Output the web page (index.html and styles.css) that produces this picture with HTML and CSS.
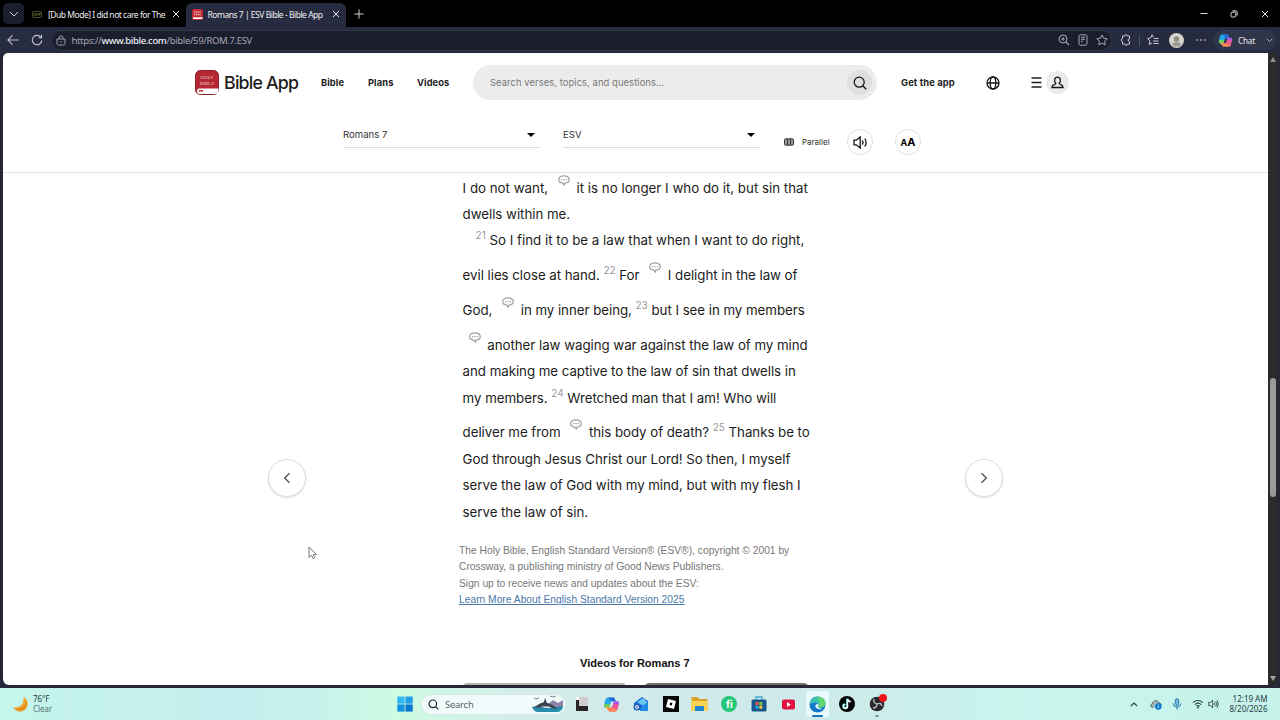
FILE: index.html
```html
<!DOCTYPE html>
<html lang="en">
<head>
    <meta charset="UTF-8">
    <meta name="viewport" content="width=device-width, initial-scale=1.0">
    <title>Romans 7 | ESV Bible - Bible App</title>
    <link rel="stylesheet" href="styles.css">
</head>
<body>
    <svg class="defs" width="0" height="0">
        <symbol id="note" viewBox="0 0 12 11">
            <path d="M6 .8C3 .8.7 2.4.7 4.6c0 1.9 1.7 3.3 4 3.6L6.3 10l.6-1.8c2.6-.2 4.4-1.7 4.4-3.6C11.300 2.400 9 .8 6 .8z" fill="none" stroke="#a3a3a3" stroke-width="1.3"/>
            <path d="M3 4.600h1.300M5.400 4.600h1.300M7.800 4.600h1.300" stroke="#a3a3a3" stroke-width="1.300"/>
        </symbol>
        <symbol id="close" viewBox="0 0 8 8">
            <path d="M1 1l6 6M7 1L1 7" fill="none" stroke="#e4e4e8" stroke-width="1"/>
        </symbol>
        <symbol id="copilot" viewBox="0 0 16 16">
            <path d="M4.500 1.500h5q1.300 0 1.700 1.300L12 5H9q-1.400 0-1.800 1.400L5.700 11H3Q.3 11 1 8l1.300-4.800q.5-1.700 2.200-1.700z" fill="#25a9e8"/>
            <path d="M5 1.500h4.500q1.300 0 1.700 1.300L12 5H8L6 2.800z" fill="#2468dc"/>
            <path d="M1.200 7.500l5.600.3-1.100 3.200H3Q.5 11 1.200 7.500z" fill="#75cd53"/>
            <path d="M2 10.600l3.900-.3L4.500 13z" fill="#f4c534"/>
            <path d="M11.500 14.500h-5q-1.300 0-1.700-1.300L4 11h3q1.400 0 1.800-1.400L10.300 5H13q2.700 0 2 3l-1.300 4.800q-.5 1.700-2.200 1.700z" fill="#ed5a94"/>
            <path d="M10.300 5H13q2.500 0 2 3l-5.500-.5z" fill="#a65be8"/>
            <path d="M4 11h3l6.500 2q-.6 1.500-2 1.500h-5q-1.300 0-1.700-1.300z" fill="#ff8a4a"/>
        </symbol>
    </svg>

    <!-- tab strip -->
    <div class="tabs">
        <button class="tab-menu"><svg width="10" height="6" viewBox="0 0 10 6"><path d="M1 1l4 4 4-4" fill="none" stroke="#d0d1d8"/></svg></button>
        <div class="tab">
            <span class="fav-dub">DVP</span>
            <span class="tab-title dub-title">[Dub Mode] I did not care for The</span>
            <svg width="8" height="8"><use href="#close"/></svg>
        </div>
        <div class="tab active">
            <svg width="11" height="11" viewBox="0 0 11 11"><rect width="11" height="11" rx="2" fill="#c02b36"/><path d="M2 3h7M2 5.500h7" stroke="#e9a9ad" stroke-width="1.300" stroke-dasharray="1.300 .5"/><path d="M1 8.300h9.500v1.700H1z" fill="#fff"/></svg>
            <span class="tab-title active-title">Romans 7 | ESV Bible - Bible App</span>
            <svg width="8" height="8"><use href="#close"/></svg>
        </div>
        <svg class="new-tab" width="10" height="10" viewBox="0 0 10 10"><path d="M5 .5v9M.5 5h9" stroke="#d3d3d7"/></svg>
        <div class="window-buttons">
            <svg width="8" height="8" viewBox="0 0 8 8"><path d="M.5 3.500h7" stroke="#ddd"/></svg>
            <svg width="8" height="8" viewBox="0 0 8 8"><rect x="1" y="2.200" width="4.800" height="4.800" rx="1" fill="none" stroke="#ddd"/><path d="M2.500.8h3.200q1.500 0 1.500 1.500v3.200" fill="none" stroke="#ddd"/></svg>
            <svg width="8" height="8"><use href="#close"/></svg>
        </div>
    </div>

    <!-- address bar -->
    <div class="toolbar">
        <svg class="back" width="12" height="12" viewBox="0 0 12 12"><path d="M11.500 6H1M5.500 1.300L.9 6l4.600 4.700" fill="none" stroke="#bfc2cf" stroke-width="1.100"/></svg>
        <svg class="reload" width="12" height="12" viewBox="0 0 12 12"><path d="M10.700 6.400A4.700 4.700 0 1 1 9.200 2.600l1.100 1M10.500.8v3H7.600" fill="none" stroke="#bfc2cf" stroke-width="1.100"/></svg>
        <div class="address">
            <svg width="10" height="11" viewBox="0 0 10 11"><path d="M3 4V2.900a2 2 0 0 1 4 0V4M1 4h8v4.500q0 1.500-1.500 1.500h-5Q1 10 1 8.500zM4.300 6.900h1.400" fill="none" stroke="#9b9daa"/></svg>
            <span class="url">https://<b>www.bible.com</b>/bible/59/ROM.7.ESV</span>
            <span class="address-icons">
                <svg width="12" height="12" viewBox="0 0 12 12"><circle cx="5" cy="5" r="4" fill="none" stroke="#a4a7b5"/><path d="M3.300 5h3.400M5 3.300v3.400M8 8l3.200 3.200" stroke="#a4a7b5" stroke-width="1.100"/></svg>
                <svg width="12" height="12" viewBox="0 0 12 12"><rect x="2" y=".8" width="8" height="10.400" rx="1.500" fill="none" stroke="#a4a7b5"/><path d="M4 3.300h4M4 5.300h4M4 7.300h2" stroke="#a4a7b5"/></svg>
                <svg width="12" height="12" viewBox="0 0 12 12"><path d="M6 .9l1.600 3.300 3.600.5-2.600 2.500.6 3.600L6 9.100l-3.200 1.700.6-3.600L.8 4.700l3.600-.5z" fill="none" stroke="#a4a7b5"/></svg>
            </span>
        </div>
        <svg class="ext" width="12" height="12" viewBox="0 0 12 12"><path d="M2.500 2h2.300a1.300 1.300 0 0 1 2.600 0H9.500v2.800a1.300 1.300 0 1 0 0 2.600V10H7.400a1.300 1.300 0 0 1-2.600 0H2.500V7.400a1.300 1.300 0 1 1 0-2.600z" fill="none" stroke="#c9cbd6"/></svg>
        <span class="divider"></span>
        <svg class="favorites" width="12" height="12" viewBox="0 0 12 12"><path d="M6.500 3.500L5 .8 3.600 4l-3.100.5 2.300 2.300-.5 3.700L5 9M7 4.500h4.500M6 7h5.500M6.500 9.500h5" fill="none" stroke="#c9cbd6"/></svg>
        <svg class="avatar" width="15" height="15" viewBox="0 0 15 15"><circle cx="7.500" cy="7.500" r="7.500" fill="#d6d4ce"/><circle cx="7.500" cy="6" r="2.700" fill="#8e8d84"/><path d="M3 12q0-3 4.500-3t4.500 3q-4.500 3-9 0z" fill="#9d9c93"/></svg>
        <svg class="more" width="10" height="4" viewBox="0 0 10 4"><path d="M.5 2h1.300M4.300 2h1.300M8.100 2h1.300" stroke="#d5d6dd" stroke-width="1.300"/></svg>
        <div class="chat">
            <svg width="15" height="15"><use href="#copilot"/></svg>
            <span>Chat</span>
            <svg width="7" height="5" viewBox="0 0 7 5"><path d="M.8.8l2.700 2.700L6.200.8" fill="none" stroke="#a9abb8"/></svg>
        </div>
    </div>

    <div class="viewport">
        <div class="page">
            <header class="site-header">
                <svg class="logo" width="24" height="25" viewBox="0 0 24 25">
                    <rect x=".5" y=".5" width="23" height="24" rx="5" fill="#b42733" stroke="#8d1f2a"/>
                    <path d="M4 18.500h19.500V21q-.5 3-4 3H4q-2-.5-2-2.800t2-2.700z" fill="#fff"/>
                    <path d="M4 20h4v2l-2-.8-2 .8z" fill="#c32f3a"/>
                    <text x="12" y="9" text-anchor="middle">HOLY</text>
                    <text x="12" y="14.500" text-anchor="middle">BIBLE</text>
                </svg>
                <span class="brand">Bible App</span>
                <nav class="site-nav">
                    <a class="nav-bible">Bible</a>
                    <a class="nav-plans">Plans</a>
                    <a class="nav-videos">Videos</a>
                </nav>
                <div class="search">
                    <span>Search verses, topics, and questions...</span>
                    <button class="search-button"><svg width="14" height="14" viewBox="0 0 14 14"><circle cx="6.200" cy="6.200" r="5" fill="none" stroke="#151515" stroke-width="1.300"/><path d="M9.800 9.800l3.400 3.400" stroke="#151515" stroke-width="1.300"/></svg></button>
                </div>
                <a class="get-app">Get the app</a>
                <svg class="globe" width="14" height="14" viewBox="0 0 14 14"><g fill="none" stroke="#151515" stroke-width="1.300"><circle cx="7" cy="7" r="6"/><ellipse cx="7" cy="7" rx="2.800" ry="6"/><path d="M1 7h12"/></g></svg>
                <svg class="menu" width="11" height="11" viewBox="0 0 11 11"><path d="M.5 1h10M.5 5.500h10M.5 10h10" stroke="#222" stroke-width="1.300"/></svg>
                <span class="user"><svg width="13" height="13" viewBox="0 0 13 13"><path d="M4.900 7.500C2.800 5.500 3.200 1.200 6.500 1.200s3.700 4.300 1.600 6.300c.2 1.200 3.900.8 4 4H.9c.1-3.200 3.800-2.800 4-4z" fill="none" stroke="#151515" stroke-width="1.300"/></svg></span>
            </header>

            <div class="reader-bar">
                <div class="select chapter"><span>Romans 7</span><i></i></div>
                <div class="select version"><span>ESV</span><i></i></div>
                <svg class="parallel-icon" width="10" height="8" viewBox="0 0 10 8"><rect x=".5" y=".8" width="9" height="6.400" rx="1.300" fill="#999" stroke="#333"/><path d="M3.500 1v6M6.500 1v6" stroke="#333"/></svg>
                <span class="parallel">Parallel</span>
                <button class="round audio"><svg width="15" height="13" viewBox="0 0 15 13"><path d="M1 4.200h2.300L7.200 1v11L3.300 8.800H1zM9.300 4.300q1.300 2.200 0 4.400M11.800 2.500q2.600 4 0 8" fill="none" stroke="#151515" stroke-width="1.300"/></svg></button>
                <button class="round font-size"><small>A</small>A</button>
            </div>

            <main class="chapter-text">
                <p class="line first">I do not want, <svg class="note"><use href="#note"/></svg> it is no longer I who do it, but sin that</p>
                <p class="line">dwells within me.</p>
                <p class="line indent"><sup>21</sup> So I find it to be a law that when I want to do right,</p>
                <p class="line tall">evil lies close at hand. <sup>22</sup> For <svg class="note"><use href="#note"/></svg> I delight in the law of</p>
                <p class="line tall">God, <svg class="note"><use href="#note"/></svg> in my inner being, <sup>23</sup> but I see in my members</p>
                <p class="line tall"><svg class="note"><use href="#note"/></svg> another law waging war against the law of my mind</p>
                <p class="line">and making me captive to the law of sin that dwells in</p>
                <p class="line">my members. <sup>24</sup> Wretched man that I am! Who will</p>
                <p class="line tall">deliver me from <svg class="note"><use href="#note"/></svg> this body of death? <sup>25</sup> Thanks be to</p>
                <p class="line">God through Jesus Christ our Lord! So then, I myself</p>
                <p class="line">serve the law of God with my mind, but with my flesh I</p>
                <p class="line">serve the law of sin.</p>
            </main>

            <div class="copyright">
                <p>The Holy Bible, English Standard Version® (ESV®), copyright © 2001 by<br>Crossway, a publishing ministry of Good News Publishers.</p>
                <p>Sign up to receive news and updates about the ESV:</p>
                <a href="#">Learn More About English Standard Version 2025</a>
            </div>

            <h2 class="videos-title">Videos for Romans 7</h2>
            <div class="videos">
                <div class="video"></div>
                <div class="video dark"></div>
            </div>

            <button class="page-arrow prev"><svg width="8" height="12" viewBox="0 0 8 12"><path d="M6.500 1.200L1.700 6l4.800 4.800" fill="none" stroke="#555" stroke-width="1.400"/></svg></button>
            <button class="page-arrow next"><svg width="8" height="12" viewBox="0 0 8 12"><path d="M1.500 1.200L6.300 6l-4.800 4.800" fill="none" stroke="#555" stroke-width="1.400"/></svg></button>
            <svg class="cursor" width="10" height="14" viewBox="0 0 10 14"><path d="M1 1v10.500l2.500-2.300 1.600 3.400 1.700-.8-1.500-3.300h3.200z" fill="#fff" stroke="#777"/></svg>
        </div>
        <div class="scrollbar">
            <i class="arrow-up"></i>
            <span class="thumb"></span>
            <i class="arrow-down"></i>
        </div>
    </div>

    <!-- taskbar -->
    <footer class="taskbar">
        <div class="weather">
            <svg width="16" height="17" viewBox="0 0 16 17"><path d="M10.500 1C17 4 16 14 8.500 15.500 4.500 16.300 1.500 14 .5 11.300c6.500 1.500 11-3.500 10-10.300z" fill="#f0a52c"/><path d="M2 12.500c5 1.500 10-1.500 11-7 1.800 6-4.500 11.500-11 7z" fill="#dc861d"/></svg>
            <div><span class="temp">76°F</span><span class="sky">Clear</span></div>
        </div>
        <svg class="start" width="16" height="16" viewBox="0 0 16 16"><path d="M.3.5h7.300v7.200H.3z" fill="#35b5ee"/><path d="M8.400.5h7.300v7.200H8.400z" fill="#229ee4"/><path d="M.3 8.400h7.300v7.200H.3z" fill="#1592dd"/><path d="M8.400 8.400h7.300v7.200H8.400z" fill="#0878cf"/></svg>
        <div class="task-search">
            <svg width="11" height="11" viewBox="0 0 11 11"><circle cx="4.800" cy="4.800" r="3.800" fill="none" stroke="#222" stroke-width="1.200"/><path d="M7.600 7.600l2.700 2.700" stroke="#222" stroke-width="1.200"/></svg>
            <span>Search</span>
            <svg class="orca" width="33" height="18" viewBox="0 0 33 18"><path d="M17 9l5-4 5 3 5-3v7q-2 4-6 4H6q-3-1-5-4z" fill="#8f83a8"/><path d="M1 12q7-1 14 0t17-1q-1 6-6 6H7q-4 0-6-5z" fill="#278bab"/><path d="M3 12.500Q8 8 13 7l1-4 2 5q6 1 10 6-10-2.500-23-1.500z" fill="#3a434f"/><path d="M10 11.500q6-1 11 1-6 1.500-11-1z" fill="#dfe6ea"/><path d="M3 3l2 1 3-1M19 1l3 1 3-1" fill="none" stroke="#667" stroke-width=".8"/></svg>
        </div>
        <div class="apps">
            <span class="app"><svg width="16" height="16" viewBox="0 0 16 16"><path d="M5 1h9v11H5z" fill="#d0cbcd"/><path d="M2 4h3v6h9v5H2z" fill="#282426"/><path d="M2 1h3v3H2z" fill="#f8f8f8"/></svg></span>
            <span class="app"><svg width="17" height="17"><use href="#copilot"/></svg></span>
            <span class="app"><svg width="16" height="16" viewBox="0 0 16 16"><path d="M1 7l8-6 6 4v9H5L1 11z" fill="#1769cf"/><path d="M4 6l6-4 5 5-5 3z" fill="#68c5f4"/><path d="M9 10l6-4v9H7z" fill="#1f8be5"/><circle cx="4" cy="11" r="3.500" fill="#1d5eb7"/><circle cx="4" cy="11" r="1.500" fill="none" stroke="#fff"/></svg></span>
            <span class="app"><svg width="16" height="16" viewBox="0 0 16 16"><path d="M0 0h16v16H0z" fill="#050505"/><path d="M5 3l8 2-2 8-8-2z" fill="#fff"/><path d="M7.100 6.600l2.300.5-.5 2.300-2.300-.5z" fill="#050505"/></svg></span>
            <span class="app"><svg width="17" height="16" viewBox="0 0 17 16"><path d="M.5 1h6l2 2h8v12H.5z" fill="#dca426"/><path d="M.5 5h16v10H.5z" fill="#fbd456"/><path d="M4 10h9v5H4z" fill="#2185cf"/></svg></span>
            <span class="app fiverr">fi</span>
            <span class="app"><svg width="16" height="16" viewBox="0 0 16 16"><path d="M5 4V1h6v3" fill="none" stroke="#39a9d9" stroke-width="1.300"/><rect x=".5" y="3.500" width="15" height="12" rx="1.500" fill="#17568c"/><path d="M4.500 6h3v3h-3z" fill="#f05434"/><path d="M8.300 6h3v3h-3z" fill="#84c446"/><path d="M4.500 9.700h3v3h-3z" fill="#2caaf0"/><path d="M8.300 9.700h3v3h-3z" fill="#fcc536"/></svg></span>
            <span class="app"><svg width="13" height="11" viewBox="0 0 13 11"><rect y=".5" width="13" height="10" rx="2" fill="#df1242"/><path d="M5 3l4 2.500L5 8z" fill="#fff"/></svg></span>
            <span class="app current"><svg width="17" height="17" viewBox="0 0 17 17"><circle cx="8.500" cy="8.500" r="8" fill="#1478c9"/><path d="M.7 8Q2 .5 9 .5q7 .5 7.500 7-.5 4-5 4-3-.5-2-2.500Q8 4.500.7 8z" fill="#39c3b0"/><path d="M8 1q8-1 8.500 6.500-.5 4-5 4-3-.5-2-2.500Q12 4 8 1z" fill="#61d66c"/><path d="M9.500 8q-2 4 4 5-5 1-7-2-1-3 3-3z" fill="#e6f8fb"/></svg></span>
            <span class="app"><svg width="16" height="16" viewBox="0 0 16 16"><circle cx="8" cy="8" r="8" fill="#050505"/><path d="M8.500 3v7.500a2 2 0 1 1-2-2M8.500 3q.5 2.500 3.200 2.800" fill="none" stroke="#27e4df" stroke-width="1.700" transform="translate(-.5 -.4)"/><path d="M8.500 3v7.500a2 2 0 1 1-2-2M8.500 3q.5 2.500 3.200 2.800" fill="none" stroke="#fff" stroke-width="1.500"/></svg></span>
            <span class="app obs"><svg width="16" height="16" viewBox="0 0 16 16"><circle cx="8" cy="8" r="7.300" fill="#292a2d"/><path d="M8 8Q4 7 5 3M8 8q4-2 5 2M8 8q0 4-4 4" fill="none" stroke="#b9babd" stroke-width="1.400"/></svg><i class="rec"></i></span>
        </div>
        <div class="tray">
            <svg class="up" width="8" height="5" viewBox="0 0 8 5"><path d="M.8 4.200L4 1l3.200 3.200" fill="none" stroke="#223d3d" stroke-width="1.200"/></svg>
            <svg class="cloud" width="12" height="11" viewBox="0 0 12 11"><path d="M3 8.500C0 8.500.3 5 2.500 4.700 3 1 8 .8 9 4q2.500.3 2.300 2.500" fill="#a5b8bb" stroke="#4f6063"/><circle cx="8.300" cy="7.500" r="3.200" fill="#0878d0"/><path d="M8.300 5.500v.9M8.300 7v2" stroke="#fff"/></svg>
            <svg class="mic" width="10" height="12" viewBox="0 0 10 12"><rect x="3.300" y=".8" width="3.400" height="6.500" rx="1.700" fill="#75b9e0" stroke="#2a72ac"/><path d="M1.200 5.500q0 3.600 3.800 3.600t3.800-3.600M5 9v2.500" fill="none" stroke="#2a72ac"/></svg>
            <svg class="wifi" width="12" height="10" viewBox="0 0 12 10"><path d="M1 3.700q5-4.500 10 0M2.700 5.600q3.300-3 6.600 0M4.300 7.300q1.700-1.500 3.400 0" fill="none" stroke="#2b4244" stroke-width="1.100"/><circle cx="6" cy="8.500" r=".9" fill="#2b4244"/></svg>
            <svg class="volume" width="11" height="10" viewBox="0 0 11 10"><path d="M.7 3.500h1.500L4.700 1.200v7.600L2.200 6.500H.7zM6.200 3.700q.8 1.300 0 2.600M7.700 2.500q1.700 2.500 0 5M9 1.200q2.600 3.800 0 7.600" fill="none" stroke="#2b4244" stroke-width=".9"/></svg>
            <div class="clock"><span>12:19 AM</span><span>8/20/2026</span></div>
        </div>
    </footer>
</body>
</html>
```

FILE: styles.css
```css
* {
    box-sizing: border-box;
}
body {
    margin: 0;
    width: 1280px;
    height: 720px;
    overflow: hidden;
    display: flex;
    flex-direction: column;
    background: #24273a;
    font-family: "Noto Sans", sans-serif;
}
svg {
    display: block;
    flex: none;
}
button {
    border: none;
    padding: 0;
    display: flex;
    align-items: center;
    justify-content: center;
}
p, h2 {
    margin: 0;
}
.defs {
    position: absolute;
}

/* browser tabs */
.tabs {
    height: 27px;
    display: flex;
    align-items: center;
    background: #000;
    color: #eee;
    font-size: 8.500px;
    letter-spacing: -.480px;
    white-space: nowrap;
}
.tab-menu {
    width: 21px;
    height: 21px;
    margin-left: 3px;
    border-radius: 5px;
    background: #1b1e2c;
}
.tab {
    display: flex;
    align-items: center;
    height: 24px;
    margin-top: 3px;
    padding-bottom: 2px;
    width: 162px;
    padding-left: 8px;
}
.tab.active {
    width: 160px;
    padding-left: 6px;
    background: #262b3f;
    border-radius: 6px 6px 0 0;
}
.fav-dub {
    width: 10px;
    height: 7px;
    border: 1px solid #474a28;
    border-radius: 2px;
    color: #a5a84b;
    font-size: 4px;
    line-height: 5px;
    letter-spacing: 0;
    text-align: center;
}
.dub-title {
    width: 119px;
    margin: 0 5px 0 6px;
}
.active-title {
    width: 119px;
    margin: 0 5px 0 4.500px;
}
.new-tab {
    margin-left: 8px;
}
.window-buttons {
    display: flex;
    gap: 22.500px;
    margin-left: auto;
    margin-right: 11.500px;
}

/* browser toolbar */
.toolbar {
    height: 26px;
    display: flex;
    align-items: center;
    background: #262b3f;
}
.back {
    margin-left: 7px;
}
.reload {
    margin-left: 12px;
}
.address {
    display: flex;
    align-items: center;
    width: 1061px;
    height: 21px;
    margin-left: 8px;
    padding: 0 5px;
    border: 1px solid #30354a;
    border-radius: 11px;
    background: #1b1e2d;
}
.address > svg {
    margin-left: -1px;
}
.url {
    margin-left: 5.500px;
    color: #a3a6b5;
    font-size: 9.500px;
    letter-spacing: -.350px;
}
.url b {
    color: #eceef5;
    font-weight: 500;
}
.address-icons {
    display: flex;
    gap: 7px;
    margin-left: auto;
    margin-right: -2px;
}
.ext {
    margin-left: 8px;
}
.divider {
    width: 1px;
    height: 11px;
    margin-left: 7px;
    background: #4b5064;
}
.favorites {
    margin-left: 7px;
}
.avatar {
    margin-left: 10px;
}
.more {
    margin-left: 12px;
}
.chat {
    display: flex;
    align-items: center;
    width: 62px;
    height: 20px;
    margin-left: 8px;
    padding-left: 4px;
    border-radius: 9px;
    background: #30364a;
    color: #e7e8ed;
    font-size: 8.200px;
    letter-spacing: -.200px;
}
.chat span {
    width: 18px;
    margin: 0 10px 0 5px;
}

/* web page */
.viewport {
    height: 632px;
    margin: 0 0 0 3px;
    display: flex;
}
.page {
    position: relative;
    width: 1265px;
    overflow: hidden;
    border-radius: 5px 0 0 6px;
    background: #fff;
    font-family: Inter, sans-serif;
    color: #1c1c1c;
}
.site-header {
    display: flex;
    align-items: center;
    height: 59px;
    padding-left: 192px;
}
.logo text {
    fill: #f0c6c8;
    font: 5px "Liberation Serif", serif;
}
.brand {
    width: 75px;
    margin-left: 5px;
    font-size: 17.800px;
    font-weight: 500;
    letter-spacing: -.800px;
    white-space: nowrap;
}
.site-nav {
    display: flex;
    margin-left: 22px;
    font-size: 9.300px;
    font-weight: 700;
    letter-spacing: .100px;
}
.nav-bible {
    width: 47px;
}
.nav-plans {
    width: 49px;
}
.nav-videos {
    width: 56px;
}
.search {
    display: flex;
    align-items: center;
    justify-content: space-between;
    width: 404px;
    height: 35px;
    padding: 0 5px 0 17px;
    border-radius: 18px;
    background: #ececec;
    color: #777;
    font-size: 9.400px;
    letter-spacing: .080px;
}
.search-button {
    width: 25px;
    height: 25px;
    border-radius: 50%;
    background: #dfdfdf;
}
.get-app {
    width: 62px;
    margin-left: 24px;
    font-size: 9.400px;
    font-weight: 700;
    letter-spacing: .100px;
    white-space: nowrap;
}
.globe {
    margin-left: 23px;
}
.menu {
    margin-left: 31px;
}
.user {
    display: flex;
    align-items: center;
    justify-content: center;
    width: 23px;
    height: 23px;
    margin-left: 4px;
    border-radius: 50%;
    background: #ebebeb;
}
.reader-bar {
    display: flex;
    align-items: center;
    height: 61px;
    padding-left: 340px;
    border-bottom: 1px solid #e2e2e2;
}
.select {
    display: flex;
    align-items: center;
    justify-content: space-between;
    width: 197px;
    height: 26px;
    margin-top: -14px;
    padding-right: 5px;
    border-bottom: 1px solid #ddd;
    font-size: 9.600px;
    color: #333;
}
.select i {
    border: 4px solid transparent;
    border-top-color: #000;
    border-bottom: none;
}
.version {
    margin-left: 23px;
}
.parallel-icon {
    margin-left: 24px;
}
.parallel {
    width: 29px;
    margin-left: 8px;
    font-size: 8px;
    color: #333;
}
.round {
    width: 26px;
    height: 26px;
    border: 1px solid #e3e3e3;
    border-radius: 50%;
    background: #fff;
}
.audio {
    margin-left: 16px;
}
.font-size {
    margin-left: 22px;
    font: 700 11px Inter, sans-serif;
    align-items: baseline;
    line-height: 25px;
}
.font-size small {
    font-size: 9px;
}

/* verses */
.chapter-text {
    padding: 1.400px 0 0 459.600px;
    font-size: 13.300px;
    letter-spacing: -.040px;
}
.line {
    height: 26.500px;
    line-height: 26.500px;
    white-space: nowrap;
}
.line.first {
    line-height: 28px;
    letter-spacing: 0;
}
.line.tall {
    height: 34.750px;
    padding-top: 8.250px;
}
.indent {
    padding-left: 13px;
    letter-spacing: 0;
}
.line sup {
    font-size: 10px;
    line-height: 0;
    vertical-align: 6px;
    color: #999;
}
.note {
    display: inline-block;
    width: 12px;
    height: 11px;
    margin: -10px 3px 0 6px;
    vertical-align: 7px;
}
.copyright {
    margin: 17.600px 0 0 456px;
    font: 10.270px/16.500px "Liberation Sans", Arial, sans-serif;
    color: #777;
}
.copyright a {
    color: #4a78a8;
}
.videos-title {
    margin: 45.400px 0 0 577px;
    font: 700 11.050px/18px "Liberation Sans", Arial, sans-serif;
    color: #111;
}
.videos {
    display: flex;
    gap: 19px;
    margin: 11px 0 0 460px;
}
.video {
    width: 163px;
    height: 90px;
    border-radius: 4px;
    background: #b9b1ad;
}
.video.dark {
    background: #77716c;
}

/* floating chapter arrows */
.page-arrow {
    position: absolute;
    top: 406px;
    width: 38px;
    height: 38px;
    border: 1px solid #ddd;
    border-radius: 50%;
    background: #fff;
    box-shadow: 0 1px 2px rgba(0, 0, 0, .12);
}
.prev {
    left: 265px;
}
.next {
    left: 962px;
}
.cursor {
    position: absolute;
    left: 305px;
    top: 493px;
}
.scrollbar {
    display: flex;
    flex-direction: column;
    align-items: center;
    width: 9px;
    padding: 4px 0;
    background: #2b2b2b;
}
.arrow-up {
    border: 3px solid transparent;
    border-bottom: 5px solid #8d8d8d;
    border-top: none;
}
.thumb {
    width: 6px;
    height: 119px;
    margin-top: 316px;
    border-radius: 3px;
    background: #9a9a9a;
}
.arrow-down {
    margin-top: auto;
    border: 3px solid transparent;
    border-top: 5px solid #a5a5a5;
    border-bottom: none;
}

/* windows taskbar */
.taskbar {
    display: flex;
    align-items: center;
    height: 32px;
    margin-top: 3px;
    background: linear-gradient(90deg, #c5f5eb, #c4eeee 18%, #c8f1ec 25%, #cdfbe2 31%, #d3eee9 40%, #d2e9eb 52%, #cdebea 66%, #c8f5ed 80%, #c5f3ea);
    color: #263b40;
}
.weather {
    display: flex;
    align-items: center;
    width: 384px;
    padding-left: 13px;
    gap: 4px;
    font-size: 8px;
    letter-spacing: -.100px;
    line-height: 10.500px;
}
.weather span, .clock span {
    display: block;
}
.sky {
    color: #527274;
}
.start {
    margin-left: 12.500px;
}
.task-search {
    display: flex;
    align-items: center;
    width: 145px;
    height: 21px;
    margin-left: 8.500px;
    padding: 0 1px 0 6px;
    border: 1px solid #d7e9e7;
    border-radius: 11px;
    background: #f0fcfb;
    color: #596569;
    font-size: 9.400px;
    letter-spacing: -.200px;
}
.task-search span {
    margin-left: 6px;
}
.orca {
    margin-left: auto;
}
.apps {
    display: flex;
    margin-left: 1.500px;
}
.app {
    position: relative;
    display: flex;
    align-items: center;
    justify-content: center;
    width: 23.450px;
    height: 26px;
    margin: 0 3px;
}
.fiverr {
    width: 16px;
    height: 16px;
    margin: 5px 6.730px;
    border-radius: 50%;
    background: #24c777;
    color: #fff;
    font: 700 10px Inter, sans-serif;
}
.current {
    background: #e9f8fa;
    border-radius: 3px;
}
.current::after, .obs::after {
    content: "";
    position: absolute;
    bottom: 0;
    width: 11px;
    height: 2px;
    border-radius: 1px;
    background: #1673b8;
}
.obs::after {
    width: 4px;
    background: #81989b;
}
.rec {
    position: absolute;
    top: 3px;
    right: 1px;
    width: 8px;
    height: 8px;
    border-radius: 50%;
    background: #f01018;
}
.tray {
    display: flex;
    align-items: center;
    margin-left: auto;
    padding-right: 12.500px;
}
.cloud {
    margin-left: 12px;
}
.mic {
    margin-left: 10px;
}
.wifi {
    margin-left: 10px;
}
.volume {
    margin-left: 4px;
}
.clock {
    width: 49px;
    font-size: 8px;
    line-height: 10.500px;
    text-align: right;
}
```
